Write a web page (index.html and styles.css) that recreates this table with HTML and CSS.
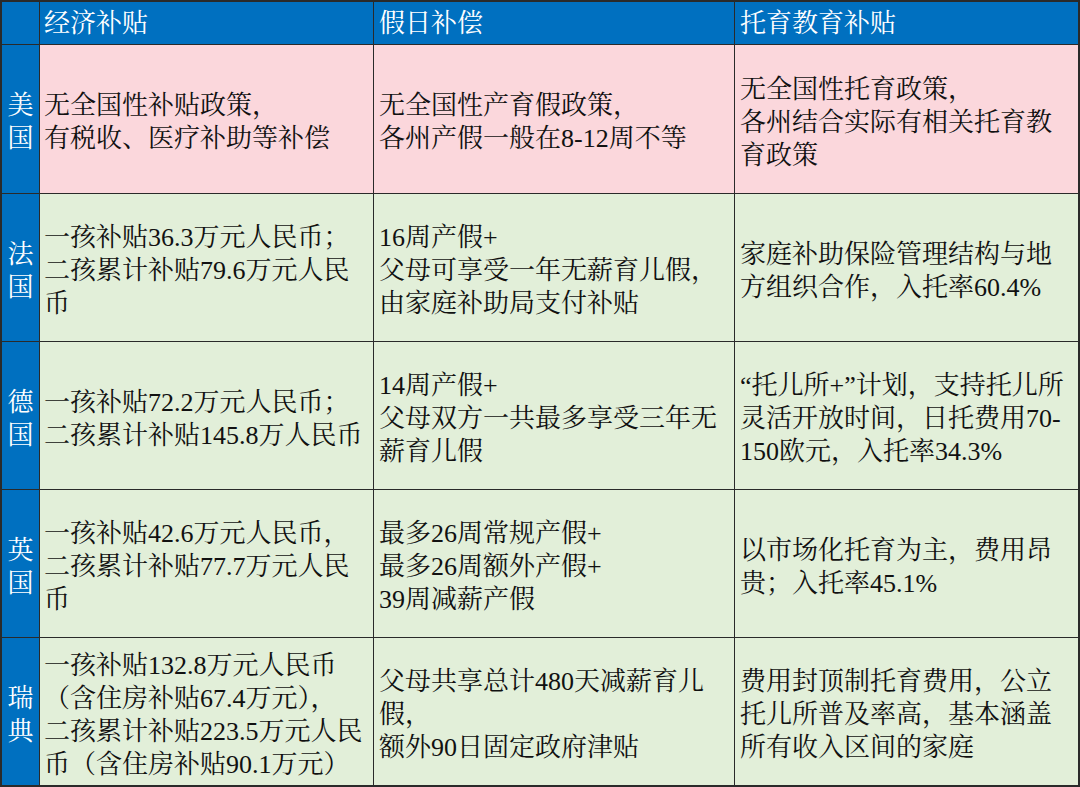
FILE: index.html
```html
<!DOCTYPE html>
<html lang="zh-CN">
<head>
<meta charset="utf-8">
<title>各国生育支持政策</title>
<link rel="stylesheet" href="styles.css">
</head>
<body>
<div class="grid">
  <div class="cell head corner"></div>
  <div class="cell head">经济补贴</div>
  <div class="cell head">假日补偿</div>
  <div class="cell head">托育教育补贴</div>

  <div class="cell side">美<br>国</div>
  <div class="cell pink">无全国性补贴政策，<br>有税收、医疗补助等补偿</div>
  <div class="cell pink">无全国性产育假政策，<br>各州产假一般在8-12周不等</div>
  <div class="cell pink">无全国性托育政策，<br>各州结合实际有相关托育教<br>育政策</div>

  <div class="cell side">法<br>国</div>
  <div class="cell green">一孩补贴36.3万元人民币；<br>二孩累计补贴79.6万元人民<br>币</div>
  <div class="cell green">16周产假+<br>父母可享受一年无薪育儿假，<br>由家庭补助局支付补贴</div>
  <div class="cell green">家庭补助保险管理结构与地<br>方组织合作，入托率60.4%</div>

  <div class="cell side">德<br>国</div>
  <div class="cell green">一孩补贴72.2万元人民币；<br>二孩累计补贴145.8万人民币</div>
  <div class="cell green">14周产假+<br>父母双方一共最多享受三年无<br>薪育儿假</div>
  <div class="cell green">“托儿所+”计划，支持托儿所<br>灵活开放时间，日托费用70-<br>150欧元，入托率34.3%</div>

  <div class="cell side">英<br>国</div>
  <div class="cell green">一孩补贴42.6万元人民币，<br>二孩累计补贴77.7万元人民<br>币</div>
  <div class="cell green">最多26周常规产假+<br>最多26周额外产假+<br>39周减薪产假</div>
  <div class="cell green">以市场化托育为主，费用昂<br>贵；入托率45.1%</div>

  <div class="cell side">瑞<br>典</div>
  <div class="cell green">一孩补贴132.8万元人民币<br>（含住房补贴67.4万元），<br>二孩累计补贴223.5万元人民<br>币（含住房补贴90.1万元）</div>
  <div class="cell green">父母共享总计480天减薪育儿<br>假，<br>额外90日固定政府津贴</div>
  <div class="cell green">费用封顶制托育费用，公立<br>托儿所普及率高，基本涵盖<br>所有收入区间的家庭</div>
</div>
</body>
</html>
```

FILE: styles.css
```css
html, body {
  margin: 0;
  padding: 0;
  background: #ffffff;
}

body {
  width: 1080px;
  height: 787px;
  overflow: hidden;
}

.grid {
  display: grid;
  grid-template-columns: 37px 333px 360px 343px;
  grid-template-rows: 42px 148px 147px 147px 147px 147px;
  gap: 1px;
  padding: 2px;
  background: #2a2a2a;
  width: 1080px;
  height: 787px;
  box-sizing: border-box;
  font-family: "Liberation Serif", "Noto Serif CJK SC", "Noto Sans CJK SC", serif;
  font-size: 26px;
  line-height: 33px;
  color: #111111;
}

.cell {
  display: flex;
  align-items: center;
  padding: 6px 4px 0 5px;
  white-space: nowrap;
  overflow: hidden;
}

.cell:nth-child(4n+2) {
  padding-left: 4px;
}

.head {
  background: #0070c0;
  color: #ffffff;
  padding-top: 1px;
}

.side {
  background: #0070c0;
  color: #ffffff;
  justify-content: center;
  text-align: center;
  padding: 6px 0 0 0;
}

.pink {
  background: #fbd7dc;
}

.green {
  background: #e2efd9;
}
```
